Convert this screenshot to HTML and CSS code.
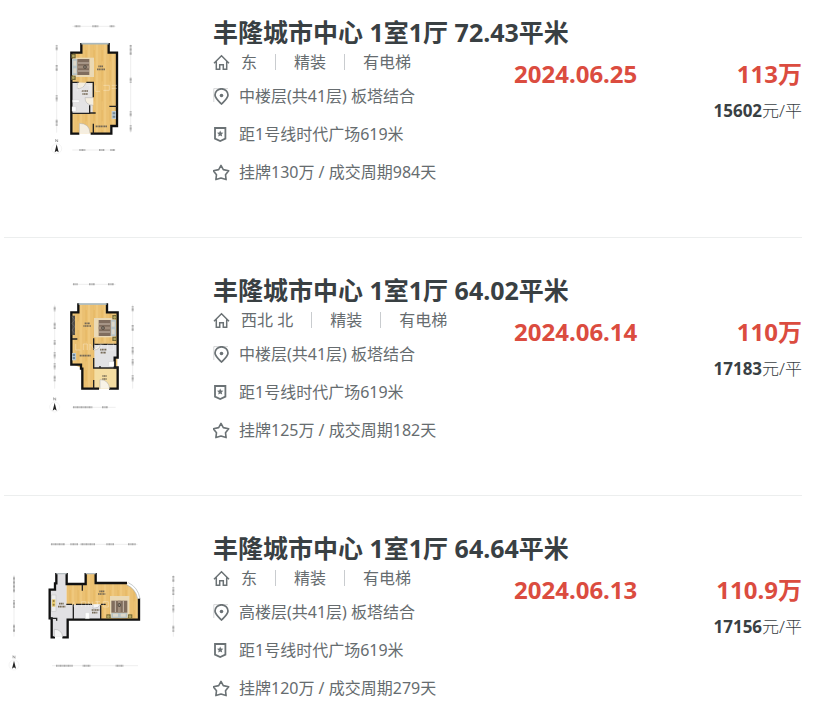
FILE: index.html
```html
<!DOCTYPE html>
<html lang="zh-CN">
<head>
<meta charset="utf-8">
<meta name="viewport" content="width=device-width, initial-scale=1">
<title>丰隆城市中心 成交房源</title>
<link rel="stylesheet" href="styles.css">
</head>
<body>
<svg class="defs" aria-hidden="true">
  <defs>
    <symbol id="home" viewBox="0 0 17 17">
      <path d="M1 9.2 8.5 1.8 16 9.2M3.3 7.5v7.7h3.4v-4.4h3.6v4.4h3.4V7.5" fill="none" stroke="currentColor" stroke-width="1.5"/>
    </symbol>
    <symbol id="pin" viewBox="0 0 17 17">
      <path d="M.8 14V.6H15" fill="none" stroke="#c4c7c8" stroke-width=".7"/>
      <path d="M8.5 16C4.8 12.4 2 10 2 7a6.5 6.2 0 0 1 13 0c0 3-2.800 5.400-6.500 9Z" fill="none" stroke="currentColor" stroke-width="1.700"/>
      <circle cx="8.500" cy="7.500" r="1.800" fill="currentColor"/>
    </symbol>
    <symbol id="badge" viewBox="0 0 17 17">
      <path d="M2 2h10.400v10.600L7.200 15 2 12.600Z" fill="none" stroke="currentColor" stroke-width="1.800"/>
      <path d="m7.200 4.500.9 2.100 2.300.2-1.700 1.500.5 2.300-2-1.200-2 1.200.5-2.300L4 6.800l2.300-.2Z" fill="currentColor"/>
    </symbol>
    <symbol id="star" viewBox="0 0 17 17">
      <path d="m8 1.400 2.300 4.200 5.400 1.200-3.200 3.900.6 4.900L8 14l-5.100 1.600.6-4.900L.3 6.800l5.400-1.200Z" fill="none" stroke="currentColor" stroke-width="1.600" stroke-linejoin="round"/>
    </symbol>
    <pattern id="wood" width="24" height="60" patternUnits="userSpaceOnUse">
      <rect width="24" height="60" fill="#ecc172"/>
      <rect width="8" height="60" fill="#efc87d"/>
      <rect x="16" width="5" height="34" fill="#e8bb68"/>
      <path d="M8 0v60M16 0v60" stroke="#e2b666" stroke-width="1"/>
    </pattern>
    <g id="bed">
      <rect x="0" y="-4" width="64" height="58" fill="#ead9b5"/>
      <rect x="-2" y="0" width="16" height="48" fill="#b8c4c6"/>
      <rect x="2" y="5" width="9" height="15" fill="#ded8c9"/>
      <rect x="2" y="28" width="9" height="15" fill="#ded8c9"/>
      <rect x="14" y="0" width="36" height="48" fill="#806d5e"/>
      <path d="M16 12h34M16 36h34" stroke="#cbbdae" stroke-width="3"/>
      <path d="M16 20h34v8H16Z" fill="#a08d7c"/>
      <circle cx="37" cy="24" r="5" fill="#302c27"/>
      <path d="m37 19 2 5-2 5-2-5Z" fill="#c6b8a6"/>
      <rect x="-4" y="-15" width="13" height="13" fill="#786b36"/>
      <rect x="-4" y="50" width="13" height="13" fill="#786b36"/>
      <circle cx="2" cy="-9" r="4" fill="#b3a965"/>
      <circle cx="2" cy="56" r="4" fill="#b3a965"/>
    </g>
    <g id="north">
      <circle r="15" fill="none" stroke="#ddd" stroke-width="1"/>
      <path d="M0-13 6 11 0 7-6 11Z" fill="#222"/>
      <path d="M-3-20v-8l6 8v-8" fill="none" stroke="#666" stroke-width="1.500"/>
    </g>
  </defs>
</svg>

<main>
<ul class="deals">
  <li class="deal">
    <svg class="plan" viewBox="-108 12 540 450" role="img" aria-label="户型图">
      <path class="dim" d="M97 49h130M50 104v264M272 104v264M97 420h130"/>
      <path class="num" d="M104 49h17M157 49h18M209 49h14M50 106v16M50 165v18M50 256v18M50 329v18M272 105v30M272 203v16M272 304v16M272 346v18M118 420h18M177 420h17M211 420h14"/>
      <path d="M124 102h82v26h24v219h-20v23H94V128h30Z" fill="url(#wood)"/>
      <path d="M96 218h62v91H96Z" fill="#e4e3e4"/>
      <path class="wall" d="M124 99v29H94v243h24M152 371h62v-23h17V128h-25V99"/>
      <path d="M124 101h82" stroke="#a9b8bd" stroke-width="5"/>
      <path class="inner" d="M96 217h20M139 217h21v45M149 286v24H96M149 309h18M208 289h23M160 341v30"/>
      <path d="M112 218v18q20 0 25-17M160 263h-25q0 22 25 23M118 370v-30q31 0 32 30" fill="#f5eee0" stroke="#aaa" stroke-width="1.500"/>
      <use href="#bed" x="98" y="147"/>
      <path d="M98 270h20v7H98ZM96 290h12v14H96Z" fill="#fff" stroke="#ccc"/>
      <rect x="215" y="303" width="13" height="24" fill="#bdc9d0"/>
      <path d="M218 307h8v6h-8Zm0 10h8v6h-8Z" fill="#738a99"/>
      <path class="mark" d="M175 169h15M171 178h24M125 243h20M127 252h17M167 349h34"/>
      <path class="ghost" d="M112 244V226l14 18v-18M140 226h16M150 226v18M166 226v18h14M190 226h18v15h-18M215 226h16M215 235h16"/>
      <use href="#north" x="50" y="416"/>
    </svg>
    <div class="body">
      <h2 class="title">丰隆城市中心 1室1厅 72.43平米</h2>
      <div class="info">
        <p class="line traits"><svg class="icon"><use href="#home"/></svg><span>东</span><span>精装</span><span>有电梯</span></p>
        <p class="line"><svg class="icon"><use href="#pin"/></svg>中楼层(共41层) 板塔结合</p>
        <p class="line"><svg class="icon"><use href="#badge"/></svg>距1号线时代广场619米</p>
        <p class="line"><svg class="icon"><use href="#star"/></svg>挂牌130万 / 成交周期984天</p>
      </div>
      <div class="result">
        <time class="date" datetime="2024-06-25">2024.06.25</time>
        <div class="money"><p class="price">113万</p><p class="unit"><b>15602</b>元/平</p></div>
      </div>
    </div>
  </li>

  <li class="deal">
    <svg class="plan" viewBox="-108 6 540 450" role="img" aria-label="户型图">
      <path class="dim" d="M97 43h130M44 104v252M278 104v252M97 412h130"/>
      <path class="num" d="M99 43h14M147 43h18M204 43h18M44 110v14M44 158v20M44 211v14M44 247v18M44 280v18M44 317v17M278 109v16M278 165v18M278 231v22M278 268v18M278 316v18M99 412h58M186 412h18"/>
      <path d="M116 103h84v24h32v229H128v-61l-32-12V127h20Z" fill="url(#wood)"/>
      <path d="M163 224h69v42l-8 3v20h8v5h-69Z" fill="#e2e2e4"/>
      <path d="M163 296h69v60h-69Z" fill="#f4dda2"/>
      <path class="wall" d="M115 100v27H94v157h29v12h4v60h50M207 356h26v-64h-9v-29h9V127h-32v-27"/>
      <path d="M116 102h84" stroke="#a9b8bd" stroke-width="5"/>
      <path class="inner" d="M96 207h16M161 205v34M161 223h72M161 264v30h72M161 330v26M180 294v-6"/>
      <path d="M161 240q18 0 20-16M180 356v-27q26 0 29 27" fill="#f8f3e7" stroke="#aaa" stroke-width="1.500"/>
      <use href="#bed" transform="translate(226 198) rotate(180)"/>
      <rect x="95" y="137" width="10" height="58" fill="#514e49"/>
      <path d="m96 140 8 10-8 10 8 10-8 10 8 10" fill="none" stroke="#999" stroke-width="1"/>
      <rect x="96" y="249" width="12" height="22" fill="#b8c7d0"/>
      <path d="M98 252h7v6h-7Zm0 9h7v6h-7Z" fill="#738a99"/>
      <rect x="207" y="275" width="15" height="14" fill="#fff" stroke="#ccc"/>
      <path class="mark" d="M134 160h16M130 168h23M180 239h20M182 248h16M119 257h33M187 318h13M187 327h13"/>
      <path class="ghost" d="M107 222v18h14M130 240v-18h12v18M150 240v-18l14 18v-18M175 222h16M183 222v18M203 222h18v18h-18Z"/>
      <use href="#north" x="44" y="411"/>
    </svg>
    <div class="body">
      <h2 class="title">丰隆城市中心 1室1厅 64.02平米</h2>
      <div class="info">
        <p class="line traits"><svg class="icon"><use href="#home"/></svg><span>西北 北</span><span>精装</span><span>有电梯</span></p>
        <p class="line"><svg class="icon"><use href="#pin"/></svg>中楼层(共41层) 板塔结合</p>
        <p class="line"><svg class="icon"><use href="#badge"/></svg>距1号线时代广场619米</p>
        <p class="line"><svg class="icon"><use href="#star"/></svg>挂牌125万 / 成交周期182天</p>
      </div>
      <div class="result">
        <time class="date" datetime="2024-06-14">2024.06.14</time>
        <div class="money"><p class="price">110万</p><p class="unit"><b>17183</b>元/平</p></div>
      </div>
    </div>
  </li>

  <li class="deal">
    <svg class="plan" viewBox="12 0 540 450" role="img" aria-label="户型图">
      <path class="dim" d="M151 43h262M42 135v185M520 135v185M156 407h258"/>
      <path class="num" d="M153 43h42M211 43h23M242 43h43M319 43h23M384 43h24M42 140v47M42 211v22M42 284v22M520 138v18M520 172v23M520 225v22M520 287v18M168 407h50M248 407h24M347 407h23"/>
      <path d="M199 164h58v-32h30v26h94q28 12 36 47v64H199Z" fill="url(#wood)"/>
      <path d="M169 132h30v92h102v44h-98v53h-47v-54l-6-4v-85h19Z" fill="#e1e0e3"/>
      <path class="wall" d="M169 129v31h-4v19h-16v86h6v57h10M187 322h16v-53h214v-64M381 159h-94v-30M257 129v33h-57v-33"/>
      <path d="M169 131h31M257 131h30" stroke="#b5bdc0" stroke-width="4"/>
      <path d="M382 161q29 13 34 45" fill="none" stroke="#fff" stroke-width="7"/>
      <path d="M379 164q28 12 34 42M385 158q29 14 35 48" fill="none" stroke="#a7b0b4" stroke-width="2"/>
      <path class="inner" d="M247 164v18M199 223h17M228 223h48M303 223h14M220 223v45M302 226v42M150 265h20v7"/>
      <path d="M279 223v12q17 0 22-12M163 320v-22q22 0 25 22" fill="#f6f6f6" stroke="#aaa" stroke-width="1.500"/>
      <use href="#bed" transform="translate(334 262) rotate(-90)"/>
      <rect x="154" y="195" width="14" height="50" fill="#eee" stroke="#aaa"/>
      <path d="M156 208h10v22h-10Z" fill="#e8cb72"/>
      <circle cx="161" cy="213" r="3" fill="#947d41"/>
      <circle cx="161" cy="224" r="3" fill="#947d41"/>
      <path d="M256 248h12v18h-12Z" fill="#fff" stroke="#ccc"/>
      <path class="mark" d="M298 184h16M294 192h22M177 221h15M174 230h22M275 240h23M276 248h16"/>
      <path class="ghost" d="M222 215v16h12M245 231v-16h12v16M265 231v-16l12 16v-16M286 215h14M293 215v16M310 215h15v16h-15Z"/>
      <use href="#north" x="42" y="405"/>
    </svg>
    <div class="body">
      <h2 class="title">丰隆城市中心 1室1厅 64.64平米</h2>
      <div class="info">
        <p class="line traits"><svg class="icon"><use href="#home"/></svg><span>东</span><span>精装</span><span>有电梯</span></p>
        <p class="line"><svg class="icon"><use href="#pin"/></svg>高楼层(共41层) 板塔结合</p>
        <p class="line"><svg class="icon"><use href="#badge"/></svg>距1号线时代广场619米</p>
        <p class="line"><svg class="icon"><use href="#star"/></svg>挂牌120万 / 成交周期279天</p>
      </div>
      <div class="result">
        <time class="date" datetime="2024-06-13">2024.06.13</time>
        <div class="money"><p class="price">110.9万</p><p class="unit"><b>17156</b>元/平</p></div>
      </div>
    </div>
  </li>
</ul>
</main>
</body>
</html>
```
FILE: styles.css
```css
* {
  box-sizing: border-box;
}

body {
  margin: 0;
  background: #fff;
  color: #394043;
  font-family: "Noto Sans", "Noto Sans CJK SC", sans-serif;
  font-size: 16px;
}

h2,
p,
ul {
  margin: 0;
  padding: 0;
}

.defs {
  position: absolute;
  width: 0;
  height: 0;
}

.deals {
  list-style: none;
  padding: 0 27px 0 4px;
}

.deal {
  display: flex;
  gap: 29px;
  padding: 34px 0 53px;
  border-bottom: 1px solid #eceeee;
}

.deal:first-child {
  padding-top: 14px;
}

.deal:last-child {
  padding-bottom: 0;
  border-bottom: 0;
}

/* Floor plan thumbnail */
.plan {
  flex: none;
  width: 180px;
  height: 150px;
}

.dim,
.num,
.wall,
.inner,
.mark,
.ghost {
  fill: none;
}

.dim {
  stroke: #ccc;
  stroke-width: 1;
}

.num {
  stroke: #aaa;
  stroke-width: 6;
  stroke-dasharray: 3 1;
}

.wall {
  stroke: #111;
  stroke-width: 7;
}

.inner {
  stroke: #222;
  stroke-width: 4;
}

.mark {
  stroke: #766a56;
  stroke-width: 5;
  stroke-dasharray: 4 1;
}

.ghost {
  stroke: #fff;
  stroke-width: 3;
  opacity: 0.3;
}

/* Listing text */
.body {
  flex: 1;
  display: grid;
  grid-template-columns: minmax(0, 1fr) 288px;
  align-content: start;
}

.title {
  grid-column: 1 / -1;
  font-size: 25px;
  line-height: 36px;
  font-weight: 700;
}

.line {
  display: flex;
  align-items: center;
  gap: 9px;
  margin-bottom: 14px;
  color: #666c6f;
  line-height: 24px;
  white-space: nowrap;
}

.line:last-child {
  margin-bottom: 0;
}

.traits {
  gap: 0;
  margin-bottom: 10px;
}

.traits span {
  display: flex;
  align-items: center;
}

.traits .icon {
  margin-right: 11px;
}

.traits span + span::before {
  content: "";
  width: 1px;
  height: 16px;
  margin: 0 18px;
  background: #c9cccf;
}

.icon {
  flex: none;
  width: 17px;
  height: 17px;
  color: #6b7275;
}

.result {
  display: flex;
  justify-content: space-between;
  padding-top: 10px;
}

.date,
.price {
  color: #db4c3f;
  font-size: 24px;
  line-height: 28px;
  font-weight: 700;
}

.money {
  text-align: right;
}

.unit {
  margin-top: 11px;
  font-size: 17px;
  line-height: 24px;
  font-weight: 300;
}

.unit b {
  font-weight: 700;
}
```
